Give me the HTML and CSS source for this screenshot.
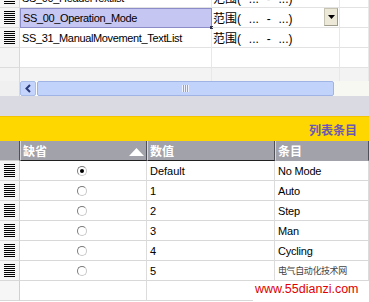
FILE: index.html
```html
<!DOCTYPE html>
<html lang="zh">
<head>
  <meta charset="UTF-8">
  <title>列表条目</title>
  <link rel="stylesheet" href="styles.css">
</head>
<body>
  <div class="top">
    <div class="rows">
      <div class="row first">
        <div class="rh"><span class="grip"></span></div>
        <div class="c1">SS_00_HeaderTextlist</div>
        <div class="c2">范围( ... - ...)</div>
        <div class="c3"></div>
      </div>
      <div class="row">
        <div class="rh"><span class="grip"></span></div>
        <div class="c1 sel">SS_00_Operation_Mode<span class="handle"></span></div>
        <div class="c2 combo">范围( ... - ...)
          <span class="drop"><svg width="7" height="4" viewBox="0 0 7 4"><path d="M0 0h7L3.5 4z" fill="#000"/></svg></span>
        </div>
        <div class="c3"></div>
      </div>
      <div class="row">
        <div class="rh"><span class="grip"></span></div>
        <div class="c1">SS_31_ManualMovement_TextList</div>
        <div class="c2">范围( ... - ...)</div>
        <div class="c3"></div>
      </div>
      <div class="row">
        <div class="rh"></div>
        <div class="c1"></div>
        <div class="c2"></div>
        <div class="c3"></div>
      </div>
      <div class="row empty">
        <div class="rh"></div>
        <div class="c1"></div>
        <div class="c2"></div>
        <div class="c3"></div>
      </div>
    </div>
    <div class="hscroll">
      <div class="corner"></div>
      <div class="arrow"><svg width="6" height="9" viewBox="0 0 6 9"><path d="M5 1L1.5 4.5 5 8" fill="none" stroke="#2a3a78" stroke-width="2"/></svg></div>
      <div class="thumb"><span class="ridges"></span></div>
      <div class="track"></div>
    </div>
  </div>

  <div class="gap"></div>
  <div class="band"><span class="band-title">列表条目</span></div>

  <div class="grid">
    <div class="grow head">
      <div class="rh"></div>
      <div class="g1">缺省<svg class="sort" width="15" height="8" viewBox="0 0 15 8"><path d="M0 8L7.5 0 15 8z" fill="#fff"/></svg></div>
      <div class="g2">数值</div>
      <div class="g3">条目</div>
    </div>
    <div class="grow">
      <div class="rh"><span class="grip"></span></div>
      <div class="g1"><span class="radio on"></span></div>
      <div class="g2">Default</div>
      <div class="g3">No Mode</div>
    </div>
    <div class="grow">
      <div class="rh"><span class="grip"></span></div>
      <div class="g1"><span class="radio"></span></div>
      <div class="g2">1</div>
      <div class="g3">Auto</div>
    </div>
    <div class="grow">
      <div class="rh"><span class="grip"></span></div>
      <div class="g1"><span class="radio"></span></div>
      <div class="g2">2</div>
      <div class="g3">Step</div>
    </div>
    <div class="grow">
      <div class="rh"><span class="grip"></span></div>
      <div class="g1"><span class="radio"></span></div>
      <div class="g2">3</div>
      <div class="g3">Man</div>
    </div>
    <div class="grow">
      <div class="rh"><span class="grip"></span></div>
      <div class="g1"><span class="radio"></span></div>
      <div class="g2">4</div>
      <div class="g3">Cycling</div>
    </div>
    <div class="grow">
      <div class="rh"><span class="grip"></span></div>
      <div class="g1"><span class="radio"></span></div>
      <div class="g2">5</div>
      <div class="g3 mark">电气自动化技术网</div>
    </div>
    <div class="grow">
      <div class="rh"></div>
      <div class="g1"></div>
      <div class="g2"></div>
      <div class="g3"></div>
    </div>
  </div>

  <div class="watermark">www.55dianzi.com</div>
</body>
</html>
```

FILE: styles.css
```css
body {
  margin: 0;
  width: 369px;
  height: 302px;
  overflow: hidden;
  position: relative;
  background: #fff;
  font-family: "Liberation Sans", "Noto Sans CJK SC", sans-serif;
  font-size: 11px;
  color: #000;
}

/* upper text list table */
.top {
  height: 96px;
  overflow: hidden;
}
.rows {
  height: 81px;
  overflow: hidden;
}
.row {
  display: grid;
  grid-template-columns: 20px 192px 128px 1fr;
  height: 20px;
}
.row.first {
  margin-top: -12px;
}
.row > div {
  border-bottom: 1px solid #e2e2e2;
  border-right: 1px solid #e8e8e8;
  display: flex;
  align-items: center;
  padding-left: 2px;
  white-space: nowrap;
  box-sizing: border-box;
}
.row .c1 {
  letter-spacing: -0.35px;
}
.row .c2 {
  font-size: 12px;
  word-spacing: 4.5px;
  padding-left: 1px;
}
.row .rh {
  background: #f4f4f4;
  border-right: 1px solid #d8d8d8;
  border-bottom: 1px solid #dcdcdc;
  padding-left: 4px;
}
.row.empty > div {
  background: #f3f3f3;
}
.row .sel {
  background: #c6c6f2;
  border: 1px solid #8c8cc8;
  position: relative;
}
.handle {
  position: absolute;
  right: -2px;
  bottom: -2px;
  width: 3px;
  height: 3px;
  background: #303050;
}
.combo {
  position: relative;
}
.drop {
  position: absolute;
  right: 1px;
  top: 0;
  width: 14px;
  height: 18px;
  box-sizing: border-box;
  background: #ece9d8;
  border: 1px solid #c8c4b4;
  border-right-color: #a09c8c;
  border-bottom-color: #a09c8c;
  display: flex;
  align-items: center;
  justify-content: center;
}

.grip {
  display: block;
  width: 11px;
  height: 13px;
  background: repeating-linear-gradient(to bottom, #000 0 1px, transparent 1px 2px);
}

.hscroll {
  display: flex;
  height: 15px;
}
.corner {
  width: 20px;
  background: #f0f0f0;
  border-right: 1px solid #d8d8d8;
  box-sizing: border-box;
}
.arrow {
  width: 16px;
  margin-right: 1px;
  box-sizing: border-box;
  background: #c4d4fb;
  border: 1px solid #a9bde9;
  border-radius: 2px;
  display: flex;
  align-items: center;
  justify-content: center;
}
.thumb {
  width: 297px;
  box-sizing: border-box;
  background: #c2d3fb;
  border: 1px solid #9fb3e4;
  border-radius: 2px;
  display: flex;
  align-items: center;
  justify-content: center;
}
.ridges {
  width: 7px;
  height: 7px;
  background: repeating-linear-gradient(to right, #eef3ff 0 1px, #8ea4d8 1px 2px);
}
.track {
  flex: 1;
  background: #f8f8f3;
}

.gap {
  height: 20px;
  background: #dadae2;
}
.band {
  height: 25px;
  background: #ffd700;
  border-top: 1px solid #f2c400;
  box-sizing: border-box;
  display: flex;
  align-items: center;
  justify-content: flex-end;
  padding-right: 12px;
}
.band-title {
  color: #6a58b4;
  font-weight: bold;
  font-size: 12px;
}

/* lower list entries grid */
.grow {
  display: grid;
  grid-template-columns: 20px 127px 128px 1fr;
  height: 20px;
}
.grow > div {
  box-sizing: border-box;
  border-bottom: 1px solid #d8d8d8;
  border-right: 1px solid #dcdcdc;
  display: flex;
  align-items: center;
  white-space: nowrap;
}
.grow .rh {
  background: #f6f6f6;
  border-right: 1px solid #d0d0d0;
  padding-left: 4px;
}
.grow .g1 {
  justify-content: center;
  padding-right: 2px;
}
.grow .g2,
.grow .g3 {
  padding-left: 3px;
}
.grow .g3 {
  letter-spacing: -0.2px;
}
.grow.head > div {
  background: #a2a2aa;
  color: #fff;
  font-weight: bold;
  font-size: 12px;
  letter-spacing: 0;
  border-bottom: 1px solid #202020;
  border-right: 1px solid #505058;
  border-left: 1px solid #d8d8dc;
  padding-left: 2px;
}
.grow.head .rh {
  border-left: none;
  border-bottom: 1px solid #d0d0d0;
}
.grow.head .g1 {
  justify-content: space-between;
  padding-right: 2px;
}
.grow.head .g3 {
  border-bottom-color: #a2a2aa;
}
.sort {
  margin-top: 2px;
}

.radio {
  display: block;
  width: 10px;
  height: 10px;
  box-sizing: border-box;
  border-radius: 50%;
  border: 1px solid #c8c8c8;
  border-top-color: #7a7a7a;
  border-left-color: #7a7a7a;
  position: relative;
}
.radio.on::after {
  content: "";
  position: absolute;
  left: 2px;
  top: 2px;
  width: 4px;
  height: 4px;
  border-radius: 50%;
  background: #000;
}
.grow .mark {
  color: #444;
  font-size: 9px;
  letter-spacing: -0.4px;
}

.watermark {
  position: absolute;
  left: 253px;
  top: 281px;
  width: 116px;
  height: 21px;
  background: #fff;
  color: #e00000;
  font-size: 12.5px;
  line-height: 16px;
  padding-left: 2px;
  box-sizing: border-box;
}
```
